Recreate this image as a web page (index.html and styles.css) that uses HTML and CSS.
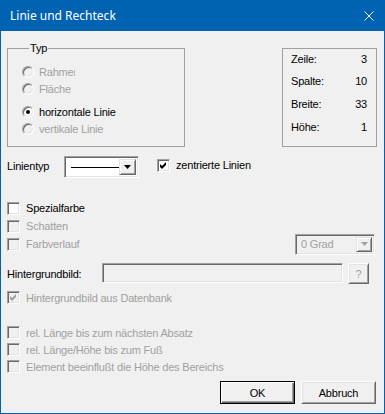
FILE: index.html
```html
<!DOCTYPE html>
<html lang="de">
<head>
<meta charset="UTF-8">
<meta name="viewport" content="width=device-width, initial-scale=1.0">
<title>Linie und Rechteck</title>
<link rel="stylesheet" href="styles.css">
</head>

<body>
<div class="window">
    <div class="titlebar">
        <span class="title">Linie und Rechteck</span>
        <svg class="close" width="10" height="10" viewBox="0 0 10 10"><path d="M0.5 0.5 L9.5 9.5 M9.5 0.5 L0.5 9.5" stroke="#fff" stroke-width="1"/></svg>
    </div>

    <div class="client">
        <div class="top">
            <fieldset class="group">
                <legend>Typ</legend>
                <div class="opt off"><span class="radio"></span><span class="clip">Rahmen</span></div>
                <div class="opt off"><span class="radio"></span>Fläche</div>
                <div class="opt gap"><span class="radio on"></span>horizontale Linie</div>
                <div class="opt off"><span class="radio"></span>vertikale Linie</div>
            </fieldset>

            <div class="info">
                <span>Zeile:</span><span class="num">3</span>
                <span>Spalte:</span><span class="num">10</span>
                <span>Breite:</span><span class="num">33</span>
                <span>Höhe:</span><span class="num">1</span>
            </div>
        </div>

        <div class="linerow">
            <span class="lbl-linetype">Linientyp</span>
            <div class="combo">
                <div class="preview"><span class="line"></span></div>
                <span class="drop"><svg width="7" height="4" viewBox="0 0 7 4"><path d="M0 0 H7 L3.5 4 Z" fill="#000"/></svg></span>
            </div>
            <div class="cbrow center-check">
                <span class="cb"><svg width="9" height="9" viewBox="0 0 9 9"><path d="M1 3 L3 5 L7 1 L7 4 L3 8 L1 6 Z" fill="#000"/></svg></span>zentrierte Linien
            </div>
        </div>

        <div class="effects">
            <div class="cbrow first"><span class="cb"></span>Spezialfarbe</div>
            <div class="cbrow off"><span class="cb"></span>Schatten</div>
            <div class="cbrow off">
                <span class="cb"></span>Farbverlauf
                <div class="combo grad">
                    <div class="preview">0 Grad</div>
                    <span class="drop"><svg width="7" height="4" viewBox="0 0 7 4"><path d="M0 0 H7 L3.5 4 Z" fill="#a0a0a0"/></svg></span>
                </div>
            </div>
        </div>

        <div class="bgrow">
            <span class="lbl-bg">Hintergrundbild:</span>
            <span class="textbox"></span>
            <span class="btn small">?</span>
        </div>

        <div class="cbrow off db">
            <span class="cb"><svg width="9" height="9" viewBox="0 0 9 9"><path d="M1 3 L3 5 L7 1 L7 4 L3 8 L1 6 Z" fill="#a0a0a0"/></svg></span>Hintergrundbild aus Datenbank
        </div>

        <div class="rel">
            <div class="cbrow off"><span class="cb"></span>rel. Länge bis zum nächsten Absatz</div>
            <div class="cbrow off"><span class="cb"></span>rel. Länge/Höhe bis zum Fuß</div>
            <div class="cbrow off"><span class="cb"></span>Element beeinflußt die Höhe des Bereichs</div>
        </div>

        <div class="buttons">
            <button class="btn default">OK</button>
            <button class="btn">Abbruch</button>
        </div>
    </div>
</div>
</body>
</html>
```

FILE: styles.css
```css
body {
    margin: 0;
    font-family: "Liberation Sans", Arial, sans-serif;
    font-size: 11px;
    letter-spacing: -0.2px;
    color: #000;
}
.window {
    width: 385px;
    height: 414px;
    box-sizing: border-box;
    border: 1px solid #0063b1;
    border-top: 0;
    background: #f0f0f0;
}
.titlebar {
    height: 31px;
    background: #0063b1;
    display: flex;
    align-items: center;
    justify-content: space-between;
    padding: 0 10px 0 9px;
    color: #fff;
}
.title {
    font-family: "Noto Sans", sans-serif;
    font-size: 12px;
    letter-spacing: 0;
}
.client {
    padding: 11px 7px 0 6px;
}
.off {
    color: #a0a0a0;
}

/* Typ group + info */
.top {
    display: flex;
    justify-content: space-between;
    align-items: flex-start;
}
.group {
    margin: 0;
    width: 178px;
    min-width: 0;
    box-sizing: border-box;
    padding: 9px 0 9px 14px;
    border: 1px solid #a0a0a0;
}
.group legend {
    margin-left: 7px;
    padding: 0 1px;
    line-height: 12px;
}
.opt {
    display: flex;
    align-items: center;
    height: 17px;
}
.opt.gap {
    margin-top: 6px;
}
.clip {
    display: inline-block;
    width: 36px;
    overflow: hidden;
    white-space: nowrap;
}
.radio {
    width: 12px;
    height: 12px;
    box-sizing: border-box;
    border-radius: 50%;
    border: 1px solid;
    border-color: #a0a0a0 #fff #fff #a0a0a0;
    box-shadow: inset 1px 1px #696969, inset -1px -1px #e3e3e3;
    background: #fff;
    margin-right: 5px;
    display: flex;
    align-items: center;
    justify-content: center;
}
.off .radio {
    background: #f0f0f0;
}
.radio.on::after {
    content: "";
    width: 4px;
    height: 4px;
    border-radius: 50%;
    background: #000;
}
.info {
    margin-top: 6px;
    width: 95px;
    height: 99px;
    box-sizing: border-box;
    border: 1px solid #a0a0a0;
    padding: 0 9px 0 8px;
    display: grid;
    grid-template-columns: 1fr auto;
    grid-template-rows: 20px repeat(3, 23px);
    align-items: center;
}
.num {
    text-align: right;
}

/* line type row */
.linerow {
    display: flex;
    align-items: center;
    height: 22px;
    margin-top: 9px;
}
.lbl-linetype {
    width: 57px;
    margin-top: -3px;
}
.combo {
    width: 75px;
    height: 22px;
    box-sizing: border-box;
    border: 1px solid;
    border-color: #a0a0a0 #fff #fff #a0a0a0;
    box-shadow: inset 1px 1px #696969, inset -1px -1px #e3e3e3;
    background: #fff;
    padding: 2px;
    display: flex;
}
.preview {
    flex: 1;
    display: flex;
    align-items: center;
}
.line {
    width: 48px;
    height: 1px;
    margin-left: 4px;
    background: #000;
}
.drop {
    width: 17px;
    box-sizing: border-box;
    background: #f0f0f0;
    border: 1px solid;
    border-color: #e3e3e3 #696969 #696969 #e3e3e3;
    box-shadow: inset 1px 1px #fff, inset -1px -1px #a0a0a0;
    display: flex;
    align-items: center;
    justify-content: center;
}
.center-check {
    margin-left: 18px;
    margin-top: -4px;
}

/* checkboxes */
.cbrow {
    display: flex;
    align-items: center;
    height: 17px;
    white-space: nowrap;
}
.cb {
    width: 13px;
    height: 13px;
    flex-shrink: 0;
    box-sizing: border-box;
    border: 1px solid;
    border-color: #a0a0a0 #fff #fff #a0a0a0;
    box-shadow: inset 1px 1px #696969, inset -1px -1px #e3e3e3;
    background: #fff;
    margin-right: 6px;
    display: flex;
    align-items: center;
    justify-content: center;
}
.off .cb {
    background: #f0f0f0;
}
.effects {
    margin-top: 21px;
}
.effects .cbrow {
    height: 18px;
}
.grad {
    margin-left: auto;
    margin-right: 2px;
    width: 80px;
    height: 21px;
    background: #f0f0f0;
}
.grad .preview {
    padding-left: 3px;
}
.grad .drop {
    width: 16px;
}

/* background image */
.bgrow {
    display: flex;
    align-items: center;
    height: 21px;
    margin-top: 10px;
}
.lbl-bg {
    width: 95px;
}
.textbox {
    width: 241px;
    height: 20px;
    box-sizing: border-box;
    border: 1px solid;
    border-color: #a0a0a0 #fff #fff #a0a0a0;
    box-shadow: inset 1px 1px #696969, inset -1px -1px #e3e3e3;
    background: #f0f0f0;
    align-self: flex-start;
}
.btn {
    box-sizing: border-box;
    font: inherit;
    letter-spacing: inherit;
    color: #000;
    background: #f0f0f0;
    border: 1px solid;
    border-color: #fff #696969 #696969 #fff;
    box-shadow: inset 1px 1px #e3e3e3, inset -1px -1px #a0a0a0;
    padding: 0;
    display: flex;
    align-items: center;
    justify-content: center;
}
.btn.small {
    width: 21px;
    height: 21px;
    margin-left: 5px;
    color: #a0a0a0;
}
.db {
    margin-top: 5px;
}
.rel {
    margin-top: 18px;
}

/* dialog buttons */
.buttons {
    display: flex;
    justify-content: flex-end;
    gap: 6px;
    margin: 6px 1px 0 0;
}
.buttons .btn {
    width: 75px;
    height: 23px;
}
.btn.default {
    border: 1px solid #000;
    box-shadow: inset 1px 1px #fff, inset -1px -1px #696969, inset -2px -2px #a0a0a0;
}
```
